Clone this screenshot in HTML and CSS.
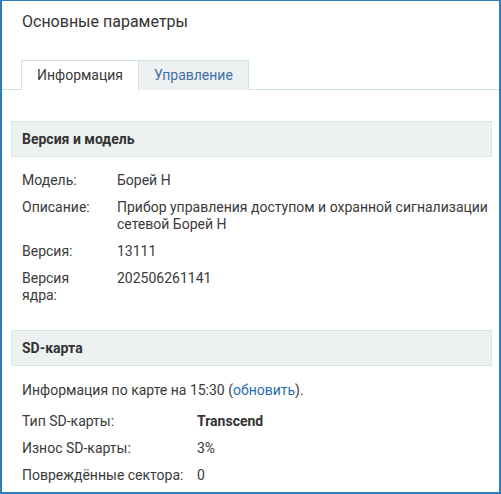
FILE: index.html
```html
<!DOCTYPE html>
<html>
<head>
<meta charset="utf-8">
<link rel="stylesheet" href="styles.css">
</head>
<body>
<div class="frame">
  <div class="title">Основные параметры</div>
  <div class="tabs">
    <div class="tab active">Информация</div>
    <div class="tab">Управление</div>
  </div>
  <div class="section first">
    <div class="sec-head">Версия и модель</div>
    <div class="rows">
      <div class="row"><div class="label">Модель:</div><div class="value">Борей Н</div></div>
      <div class="row"><div class="label">Описание:</div><div class="value">Прибор управления доступом и охранной сигнализации сетевой Борей Н</div></div>
      <div class="row"><div class="label">Версия:</div><div class="value">13111</div></div>
      <div class="row"><div class="label">Версия ядра:</div><div class="value">202506261141</div></div>
    </div>
  </div>
  <div class="section">
    <div class="sec-head">SD-карта</div>
    <div class="rows sd">
      <div class="note">Информация по карте на 15:30 (<a class="link" href="#">обновить</a>).</div>
      <div class="row"><div class="label">Тип SD-карты:</div><div class="value bold">Transcend</div></div>
      <div class="row"><div class="label">Износ SD-карты:</div><div class="value">3%</div></div>
      <div class="row"><div class="label">Повреждённые сектора:</div><div class="value">0</div></div>
    </div>
  </div>
</div>
</body>
</html>
```
FILE: styles.css
```css
html, body {
  margin: 0;
  padding: 0;
  background: #ffffff;
}
body {
  font-family: Roboto, "Liberation Sans", sans-serif;
  font-size: 14px;
  color: #3a3a3a;
}
.frame {
  box-sizing: border-box;
  width: 501px;
  height: 494px;
  border-top: 1px solid #2e7cc0;
  border-left: 2px solid #2e7cc0;
  border-right: 2px solid #2e7cc0;
  border-bottom: 2px solid #2e7cc0;
  overflow: hidden;
}
.title {
  font-size: 16px;
  line-height: 20px;
  color: #333;
  padding: 11px 0 0 20px;
  height: 48px;
}
.tabs {
  display: flex;
  padding-left: 19px;
  border-bottom: 1px solid #d0e4e4;
  height: 29px;
}
.tab {
  box-sizing: border-box;
  height: 30px;
  line-height: 29px;
  border: 1px solid #d0e4e4;
  border-bottom: none;
  background: #eef1f2;
  color: #3b6fa6;
  text-align: center;
  width: 111px;
}
.tab.active {
  background: #fff;
  color: #3a3a3a;
  width: 117px;
  border-right: none;
}
.section {
  margin: 0 7px 0 9px;
}
.section.first {
  margin-top: 31px;
}
.sec-head {
  box-sizing: border-box;
  height: 36px;
  line-height: 34px;
  background: #eef1f2;
  border: 1px solid #d6e6e7;
  padding-left: 10px;
  font-weight: bold;
  color: #333;
}
.rows {
  padding: 10px 0 21px 11px;
}
.row {
  display: flex;
  padding: 5px 0;
  line-height: 17px;
}
.label {
  box-sizing: border-box;
  width: 95px;
  padding-right: 16px;
  flex: none;
}
.value {
  flex: 1;
}
.sd .label {
  width: 175px;
  padding-right: 0;
}
.sd {
  padding-top: 16px;
}
.note {
  line-height: 17px;
  padding-bottom: 9px;
}
.link {
  color: #2a6cb3;
  text-decoration: none;
}
.bold {
  font-weight: bold;
  color: #333;
}
```
